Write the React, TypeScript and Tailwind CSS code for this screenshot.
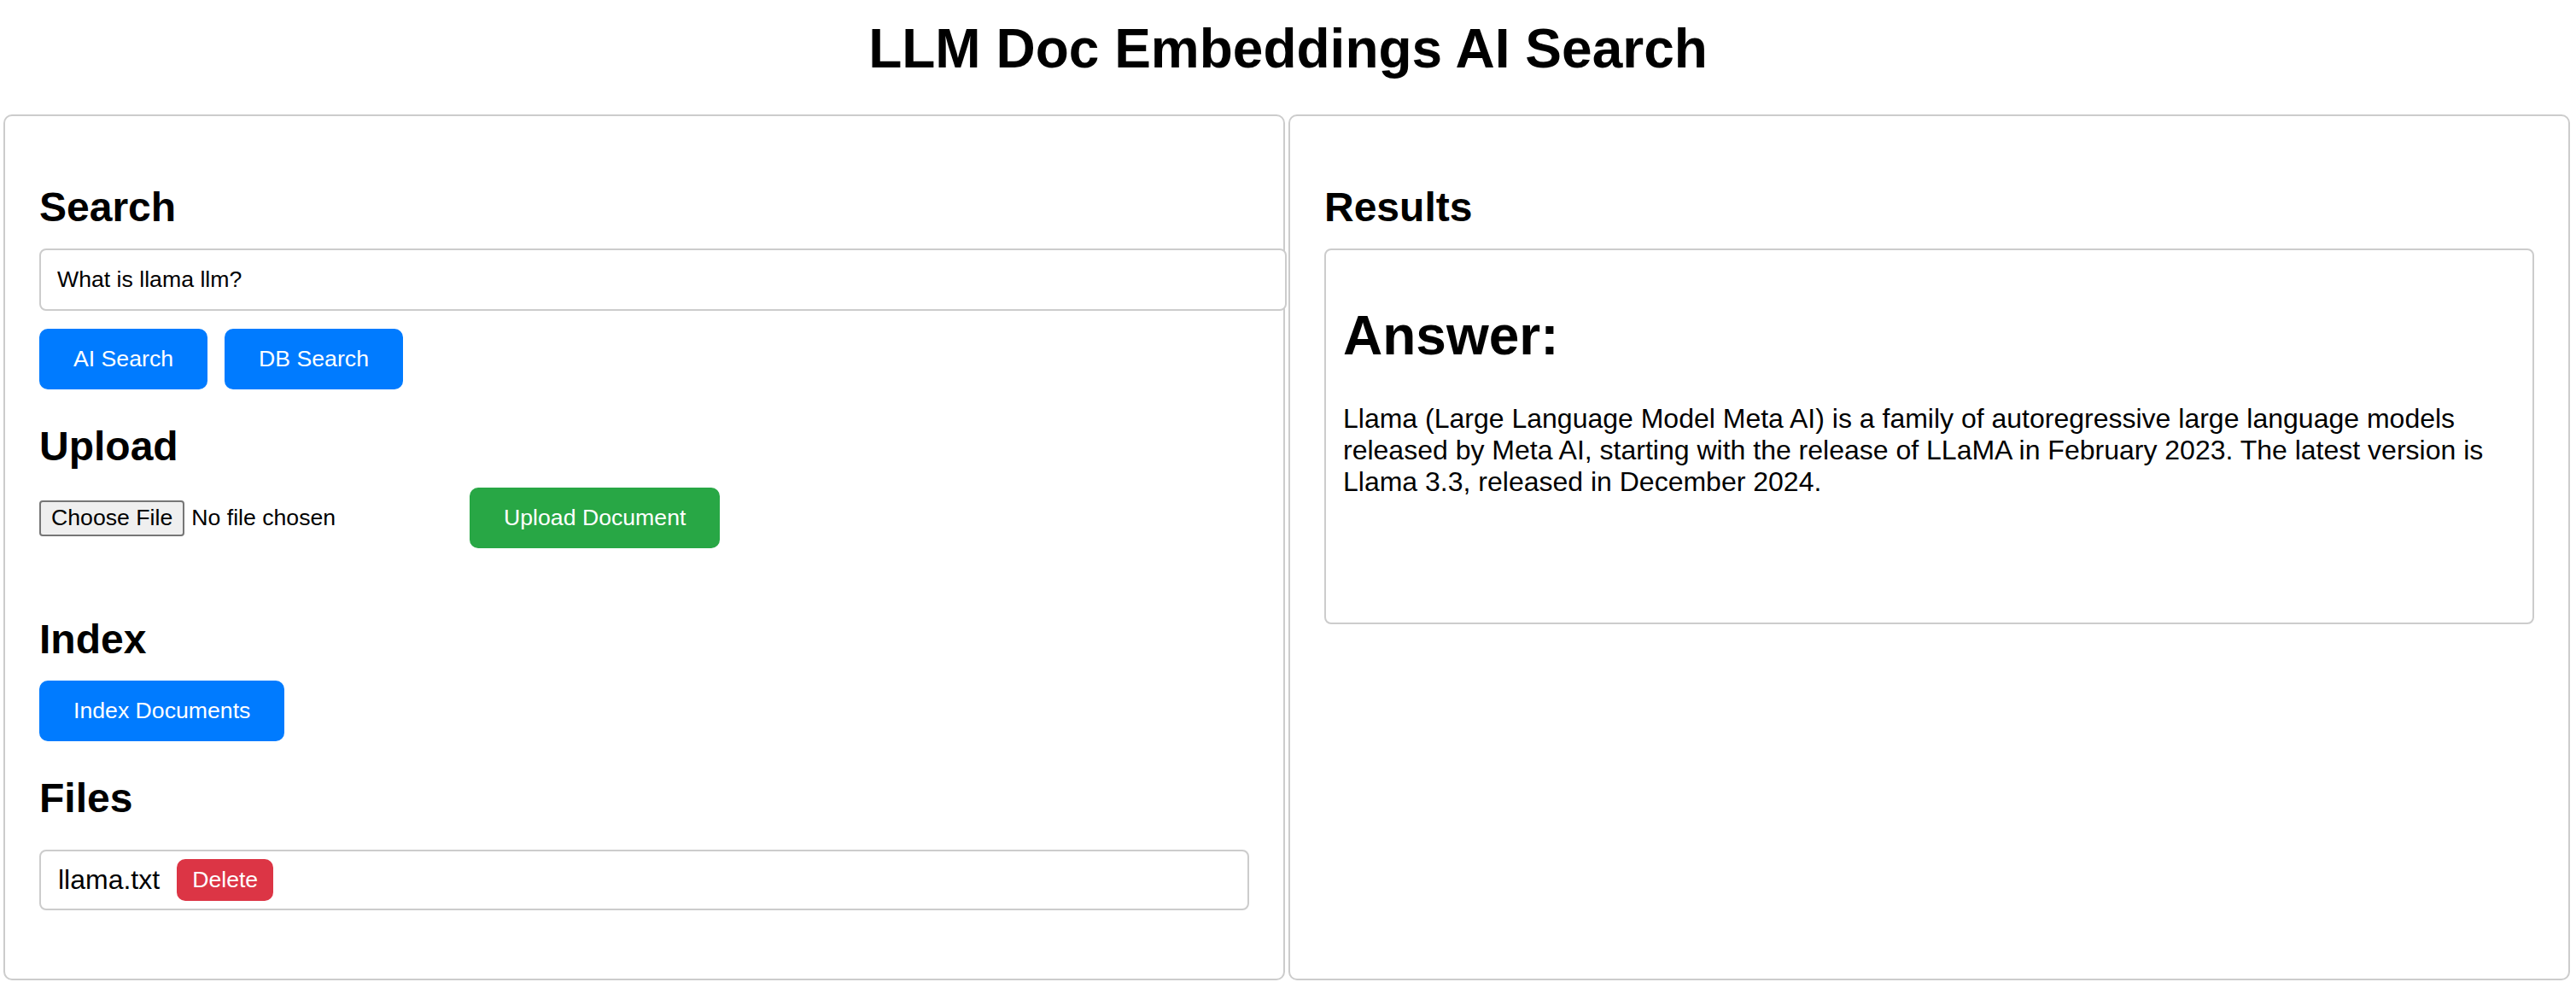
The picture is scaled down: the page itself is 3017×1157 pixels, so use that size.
import React from "react";

export default function App() {
  return (
    <div className="min-h-screen bg-white text-black font-['Liberation_Sans',Arial,sans-serif] pt-[20px]">
      <h1 className="text-center text-[64px] font-bold leading-[74px] mb-[40px]">
        LLM Doc Embeddings AI Search
      </h1>
      <div className="flex gap-[4px] pl-[4px] pr-[7px]">
        {/* Left panel */}
        <div className="flex-1 min-w-0 border-2 border-[#ccc] rounded-[10px] px-[40px] pt-[40px] pb-[40px]">
          <h2 className="mt-[39px] text-[48px] font-bold leading-[55px]">Search</h2>
          <input
            type="text"
            defaultValue="What is llama llm?"
            className="block mt-[21px] h-[73px] w-[calc(100%+44px)] border-2 border-[#ccc] rounded-[8px] pl-[19px] pr-[20px] text-[26.67px] text-black outline-none bg-white"
          />
          <div className="flex gap-[20px] mt-[21px]">
            <button className="h-[71px] px-[40px] rounded-[10px] bg-[#007bff] text-white text-[26.67px] leading-[31px]">
              AI Search
            </button>
            <button className="h-[71px] px-[40px] rounded-[10px] bg-[#007bff] text-white text-[26.67px] leading-[31px]">
              DB Search
            </button>
          </div>

          <h2 className="mt-[39px] text-[48px] font-bold leading-[55px]">Upload</h2>
          <div className="flex items-center mt-[21px] h-[71px]">
            <div className="flex items-center w-[504px]">
              <span className="flex items-center h-[42px] px-[12px] bg-[#efefef] border-2 border-[#767676] rounded-[4px] text-[26.67px] leading-[31px]">
                Choose File
              </span>
              <span className="ml-[8px] text-[26.67px] leading-[31px]">No file chosen</span>
            </div>
            <button className="h-[71px] px-[40px] rounded-[10px] bg-[#28a745] text-white text-[26.67px] leading-[31px]">
              Upload Document
            </button>
          </div>

          <h2 className="mt-[79px] text-[48px] font-bold leading-[55px]">Index</h2>
          <button className="mt-[21px] h-[71px] px-[40px] rounded-[10px] bg-[#007bff] text-white text-[26.67px] leading-[31px]">
            Index Documents
          </button>

          <h2 className="mt-[39px] text-[48px] font-bold leading-[55px]">Files</h2>
          <div className="mt-[33px] mb-[40px] h-[71px] flex items-center border-2 border-[#ccc] rounded-[8px] px-[20px]">
            <span className="text-[32px] leading-[37px]">llama.txt</span>
            <button className="ml-[20px] h-[49px] px-[18px] rounded-[10px] bg-[#dc3545] text-white text-[26.67px] leading-[31px]">
              Delete
            </button>
          </div>
        </div>

        {/* Right panel */}
        <div className="flex-1 min-w-0 border-2 border-[#ccc] rounded-[10px] px-[40px] pt-[40px] pb-[40px]">
          <h2 className="mt-[39px] text-[48px] font-bold leading-[55px]">Results</h2>
          <div className="mt-[21px] h-[440px] border-2 border-[#ccc] rounded-[8px] px-[20px] pt-[20px]">
            <h1 className="mt-[43px] text-[64px] font-bold leading-[74px]">Answer:</h1>
            <p className="mt-[42px] text-[32px] leading-[37px]">
              Llama (Large Language Model Meta AI) is a family of autoregressive large language models released by Meta AI, starting with the release of LLaMA in February 2023. The latest version is Llama 3.3, released in December 2024.
            </p>
          </div>
        </div>
      </div>
    </div>
  );
}
